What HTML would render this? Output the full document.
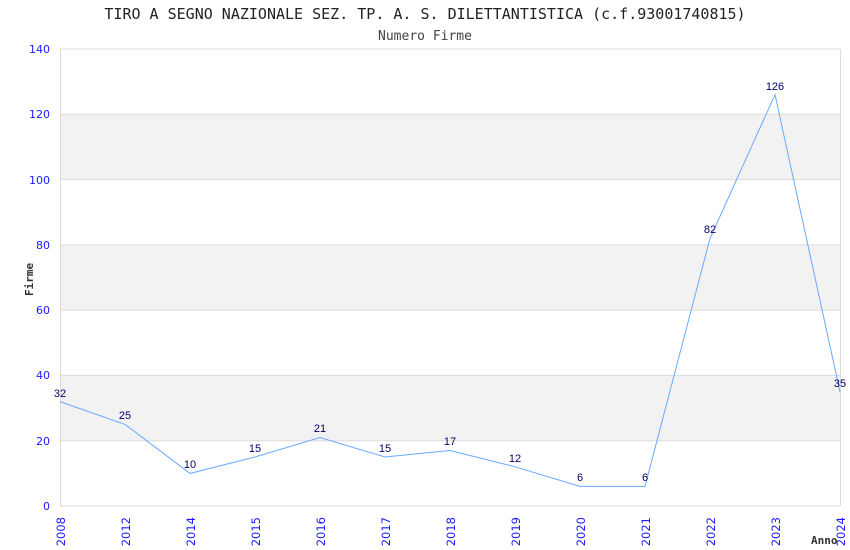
<!DOCTYPE html>
<html><head><meta charset="utf-8"><style>
html,body{margin:0;padding:0;background:#fff;}
svg{display:block;}
</style></head><body>
<svg width="850" height="550" xmlns="http://www.w3.org/2000/svg">
<rect width="850" height="550" fill="#fff"/>
<text x="425" y="19" text-anchor="middle" font-family="DejaVu Sans Mono, Liberation Mono, monospace" font-size="15" fill="#222">TIRO A SEGNO NAZIONALE SEZ. TP. A. S. DILETTANTISTICA (c.f.93001740815)</text>
<text x="425" y="40" text-anchor="middle" font-family="DejaVu Sans Mono, Liberation Mono, monospace" font-size="13" fill="#444">Numero Firme</text>
<g fill="#f2f2f2">
<rect x="60" y="114.3" width="780" height="65.3"/>
<rect x="60" y="244.9" width="780" height="65.3"/>
<rect x="60" y="375.4" width="780" height="65.3"/>
</g>
<g stroke="#dcdcdc" stroke-width="1">
<line x1="60" y1="49" x2="840" y2="49"/>
<line x1="60" y1="114.3" x2="840" y2="114.3"/>
<line x1="60" y1="179.6" x2="840" y2="179.6"/>
<line x1="60" y1="244.9" x2="840" y2="244.9"/>
<line x1="60" y1="310.1" x2="840" y2="310.1"/>
<line x1="60" y1="375.4" x2="840" y2="375.4"/>
<line x1="60" y1="440.7" x2="840" y2="440.7"/>
<line x1="60" y1="506" x2="840" y2="506"/>
<line x1="60.5" y1="49" x2="60.5" y2="506"/>
<line x1="840.5" y1="49" x2="840.5" y2="506"/>
</g>
<g font-family="DejaVu Sans, Liberation Sans, sans-serif" font-size="11" fill="#1a1aff" text-anchor="end">
<text x="50" y="53">140</text><text x="50" y="118">120</text><text x="50" y="184">100</text>
<text x="50" y="249">80</text><text x="50" y="314">60</text><text x="50" y="379">40</text>
<text x="50" y="445">20</text><text x="50" y="510">0</text>
</g>
<g font-family="DejaVu Sans, Liberation Sans, sans-serif" font-size="11.5" fill="#1a1aff" text-anchor="end">
<text transform="translate(65,517) rotate(-90)">2008</text>
<text transform="translate(130,517) rotate(-90)">2012</text>
<text transform="translate(195,517) rotate(-90)">2014</text>
<text transform="translate(260,517) rotate(-90)">2015</text>
<text transform="translate(325,517) rotate(-90)">2016</text>
<text transform="translate(390,517) rotate(-90)">2017</text>
<text transform="translate(455,517) rotate(-90)">2018</text>
<text transform="translate(520,517) rotate(-90)">2019</text>
<text transform="translate(585,517) rotate(-90)">2020</text>
<text transform="translate(650,517) rotate(-90)">2021</text>
<text transform="translate(715,517) rotate(-90)">2022</text>
<text transform="translate(780,517) rotate(-90)">2023</text>
<text transform="translate(845,517) rotate(-90)">2024</text>
</g>
<text transform="translate(33,296) rotate(-90)" font-family="DejaVu Sans Mono, Liberation Mono, monospace" font-size="11" font-weight="bold" fill="#333">Firme</text>
<text x="811" y="544" font-family="DejaVu Sans Mono, Liberation Mono, monospace" font-size="11" font-weight="bold" fill="#333">Anno</text>
<polyline fill="none" stroke="#66aaff" stroke-width="1" points="60,401.6 125,424.4 190,473.4 255,457 320,437.5 385,457 450,450.5 515,466.8 580,486.4 645,486.4 710,238.4 775,94.7 840,391.8"/>
<g font-family="Liberation Sans, sans-serif" font-size="11" fill="#000066" text-anchor="middle">
<text x="60" y="397">32</text><text x="125" y="419">25</text><text x="190" y="468">10</text>
<text x="255" y="452">15</text><text x="320" y="432">21</text><text x="385" y="452">15</text>
<text x="450" y="445">17</text><text x="515" y="462">12</text><text x="580" y="481">6</text>
<text x="645" y="481">6</text><text x="710" y="233">82</text><text x="775" y="90">126</text>
<text x="840" y="387">35</text>
</g>
</svg>
</body></html>
